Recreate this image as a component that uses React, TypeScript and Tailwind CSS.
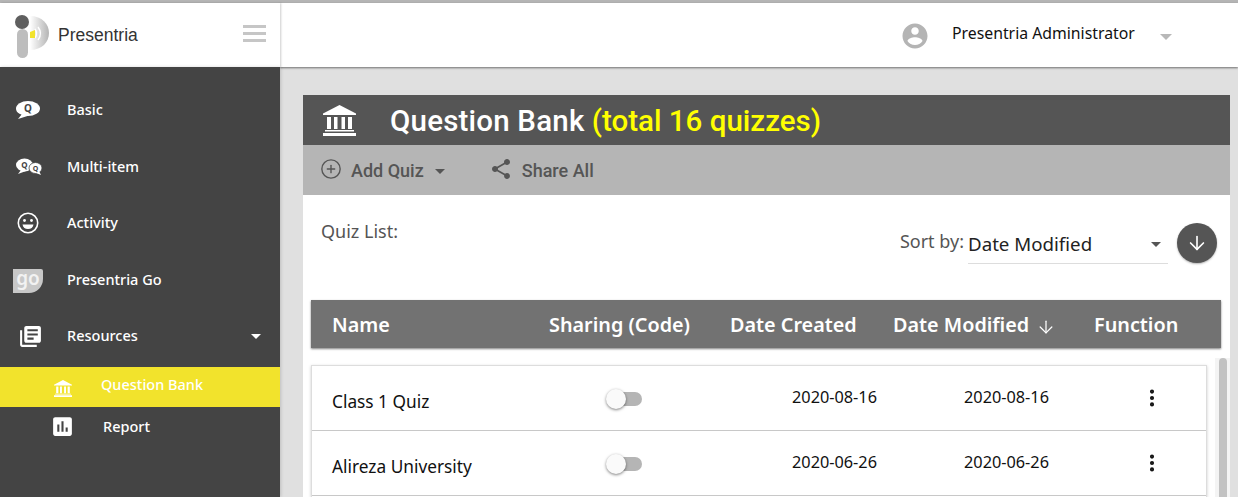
import React from 'react';
import { ArrowDown, CirclePlus, MoreVertical } from 'lucide-react';

const SANS = "font-['Noto_Sans','Open_Sans',sans-serif]";

const BankIcon: React.FC<{ className?: string }> = ({ className }) => (
    <svg viewBox="0 0 33 31" className={className} fill="currentColor">
        <path d="M16.500 0 L33 8.500 V10 H0 V8.500 Z" />
        <path d="M4 12h4v12H4zM11 12h3.500v12H11zM18.500 12H22v12h-3.500zM25 12h4v12h-4z" />
        <path d="M2 25h29v1.500H2zM0 28h33v3H0z" />
    </svg>
);

const Logo = () => (
    <svg width="36" height="46" viewBox="0 0 36 46" className="shrink-0">
        <defs>
            <linearGradient id="logoFade" x1="0" x2="1" y1="0" y2="0">
                <stop offset="0" stopColor="#ffffff" />
                <stop offset="1" stopColor="#b4b4b4" />
            </linearGradient>
        </defs>
        <path d="M16 4 C28 4 35 12 35 21 C35 30 28 38 16 38 Z" fill="url(#logoFade)" />
        <path d="M24 15 C27 19 27 24 24 28" stroke="#ffffff" strokeWidth="1.500" fill="none" />
        <path d="M21 17 C23 20 23 23 21 26" stroke="#ffffff" strokeWidth="1.500" fill="none" />
        <rect x="3" y="17" width="11" height="29" rx="5.500" fill="#bdbdbd" />
        <circle cx="8" cy="10" r="7" fill="#5f5f5f" />
        <path d="M16 20 L21 18 V26 L16 26 Z" fill="#f2e32c" />
    </svg>
);

const BasicIcon = () => (
    <svg width="26" height="20" viewBox="0 0 26 20">
        <ellipse cx="13" cy="8.500" rx="12" ry="7.500" fill="#fff" />
        <path d="M7 14 L3 19 L14 15.500 Z" fill="#fff" />
        <text x="13" y="12" textAnchor="middle" fontSize="10" fontWeight="700" fill="#444" fontFamily="Noto Sans">Q</text>
    </svg>
);

const MultiIcon = () => (
    <svg width="28" height="18" viewBox="0 0 28 18">
        <ellipse cx="9.500" cy="7" rx="8.500" ry="6.500" fill="#fff" />
        <path d="M6 12 L3 16 L11 13 Z" fill="#fff" />
        <ellipse cx="20.500" cy="10" rx="6.500" ry="5.500" fill="#fff" stroke="#444" strokeWidth="0.800" />
        <path d="M21 15 L26 17 L24 13 Z" fill="#fff" />
        <text x="9.500" y="10" textAnchor="middle" fontSize="8" fontWeight="700" fill="#444" fontFamily="Noto Sans">Q</text>
        <text x="20.500" y="12.500" textAnchor="middle" fontSize="7" fontWeight="700" fill="#444" fontFamily="Noto Sans">Q</text>
    </svg>
);

const SmileIcon = () => (
    <svg width="22" height="22" viewBox="0 0 22 22">
        <circle cx="11" cy="11" r="9.700" fill="none" stroke="#fff" strokeWidth="1.600" />
        <circle cx="7.500" cy="8.500" r="1.400" fill="#fff" />
        <circle cx="14.500" cy="8.500" r="1.400" fill="#fff" />
        <path d="M5.500 12.500 H16.500 C16 15.500 14 17 11 17 C8 17 6 15.500 5.500 12.500 Z" fill="#fff" />
    </svg>
);

const GoIcon = () => (
    <div className="w-[30px] h-[24px] mt-[2px] bg-[#c8c8c8] rounded-tr-[2px] rounded-br-[14px] flex items-start justify-center">
        <span className={`text-[#f2f2f2] text-[19px] leading-[18px] font-semibold ${SANS}`}>go</span>
    </div>
);

const ResourcesIcon = () => (
    <svg viewBox="0 0 24 24" className="w-[25px] h-[25px] text-white" fill="currentColor">
        <path d="M4 6H2v14c0 1.100.9 2 2 2h14v-2H4V6zm16-4H8c-1.100 0-2 .9-2 2v12c0 1.100.9 2 2 2h12c1.100 0 2-.9 2-2V4c0-1.100-.9-2-2-2zm-1 9H9V9h10v2zm-4 4H9v-2h6v2zm4-8H9V5h10v2z" />
    </svg>
);

const Caret: React.FC<{ className?: string }> = ({ className }) => (
    <div className={`w-0 h-0 border-x-[5px] border-x-transparent border-t-[5px] ${className}`} />
);

const NAV = [
    { label: 'Basic', icon: <BasicIcon />, iconClass: '' },
    { label: 'Multi-item', icon: <MultiIcon />, iconClass: 'ml-[1px]' },
    { label: 'Activity', icon: <SmileIcon />, iconClass: '' },
    { label: 'Presentria Go', icon: <GoIcon />, iconClass: '' },
    { label: 'Resources', icon: <ResourcesIcon />, iconClass: 'ml-[5px]', caret: true },
];

const QUIZZES = [
    { name: 'Class 1 Quiz', created: '2020-08-16', modified: '2020-08-16' },
    { name: 'Alireza University', created: '2020-06-26', modified: '2020-06-26' },
    { name: '', created: '', modified: '' },
];

const Sidebar = () => (
    <aside className="w-[280px] shrink-0 flex flex-col z-10">
        <div className="h-[64px] bg-white flex items-center pl-[14px] pr-[14px] shadow-[1px_0_2px_rgba(0,0,0,0.2)]">
            <Logo />
            <span className="ml-[8px] mt-[1px] text-[17.500px] text-[#333] font-['Liberation_Sans',sans-serif]">Presentria</span>
            <div className="ml-auto flex flex-col gap-[4px] -mt-[3px]">
                <div className="w-[23px] h-[3px] bg-[#c6c6c6]" />
                <div className="w-[23px] h-[3px] bg-[#c6c6c6]" />
                <div className="w-[23px] h-[3px] bg-[#c6c6c6]" />
            </div>
        </div>
        <nav className={`flex-1 bg-[#444444] pt-[14.750px] text-white text-[14.500px] font-medium ${SANS} shadow-[1px_0_3px_rgba(0,0,0,0.15)]`}>
            {NAV.map(item => (
                <div key={item.label} className="h-[56.500px] flex items-center pr-[19px]">
                    <div className="w-[56px] mr-[11px] flex justify-center">
                        <div className={item.iconClass}>{item.icon}</div>
                    </div>
                    <span>{item.label}</span>
                    {item.caret && <Caret className="ml-auto border-t-white" />}
                </div>
            ))}
            <div className="mt-[2.250px] h-[40px] bg-[#f2e32c] flex items-center">
                <BankIcon className="ml-[54px] w-[18px] h-[17px] mt-[3px] text-white" />
                <span className="ml-[29px] -mt-[3px]">Question Bank</span>
            </div>
            <div className="h-[40px] flex items-center">
                <svg viewBox="0 0 24 24" className="ml-[50px] w-[25px] h-[25px] text-white" fill="currentColor">
                    <path d="M19 3H5c-1.100 0-2 .9-2 2v14c0 1.100.9 2 2 2h14c1.100 0 2-.9 2-2V5c0-1.100-.9-2-2-2zM9 17H7v-7h2v7zm4 0h-2V7h2v10zm4 0h-2v-4h2v4z" />
                </svg>
                <span className="ml-[28px]">Report</span>
            </div>
        </nav>
    </aside>
);

const TopBar = () => (
    <header className={`h-[64px] shrink-0 bg-white flex items-center pl-[620px] shadow-[0_1px_2px_rgba(0,0,0,0.5)] z-[1] ${SANS}`}>
        <svg viewBox="0 0 24 24" className="w-[30px] h-[30px] text-[#b4b4b4] mt-[1px]" fill="currentColor">
            <path d="M12 2C6.480 2 2 6.480 2 12s4.480 10 10 10 10-4.480 10-10S17.520 2 12 2zm0 3c1.660 0 3 1.340 3 3s-1.340 3-3 3-3-1.340-3-3 1.340-3 3-3zm0 14.200c-2.500 0-4.710-1.280-6-3.220.03-1.990 4-3.080 6-3.080 1.990 0 5.970 1.090 6 3.080-1.290 1.940-3.500 3.220-6 3.220z" />
        </svg>
        <span className="ml-[22px] text-[15.800px] text-[#111] -mt-[3px]">Presentria Administrator</span>
        <Caret className="ml-[25px] mt-[3px] border-x-[6px] border-t-[6px] border-t-[#b8b8b8]" />
    </header>
);

const TableHead = () => (
    <div className={`h-[48px] bg-[#727272] flex items-center pl-[21px] pt-[2px] text-white text-[19.800px] font-semibold shadow-[0_1px_2px_rgba(0,0,0,0.5)] ${SANS}`}>
        <span className="w-[217px]">Name</span>
        <span className="w-[181px]">Sharing (Code)</span>
        <span className="w-[163px]">Date Created</span>
        <span className="w-[201px] flex items-center">
            Date Modified
            <ArrowDown className="ml-[7px] mt-[3px] w-[20px] h-[20px]" strokeWidth={1.500} />
        </span>
        <span>Function</span>
    </div>
);

const QuizRow: React.FC<{ name: string; created: string; modified: string }> = ({ name, created, modified }) => (
    <div className="h-[65px] shrink-0 flex items-center pl-[20px] border-b border-[#c8c8c8] text-[#111]">
        <span className="w-[274px] text-[17.300px] mt-[8px]">{name}</span>
        <div className="w-[186px] mt-[1px]">
            {name && (
                <div className="relative w-[36px] h-[20px] flex items-center">
                    <div className="ml-[2px] w-[34px] h-[14px] rounded-full bg-[#b5b5b5]" />
                    <div className="absolute left-0 top-0 w-[20px] h-[20px] rounded-full bg-[#fafafa] shadow-[0_1px_3px_rgba(0,0,0,0.5)]" />
                </div>
            )}
        </div>
        <span className="w-[172px] text-[16.300px] -mt-[2px]">{created}</span>
        <span className="w-[177px] text-[16.300px] -mt-[2px]">{modified}</span>
        {name && <MoreVertical className="w-[22px] h-[22px] -mt-[1px]" strokeWidth={2.500} />}
    </div>
);

const QuizCard = () => (
    <section className="flex-1 flex flex-col min-h-0">
        <div className="h-[50px] shrink-0 bg-[#555555] flex items-center pl-[20px]">
            <BankIcon className="w-[33px] h-[31px] text-white" />
            <h1 className="ml-[34px] mt-[2px] text-[29.500px] font-medium text-white font-['Roboto',sans-serif]">
                <span className="tracking-[0.2px]">Question Bank</span> <span className="text-[#ffff00]">(total 16 quizzes)</span>
            </h1>
        </div>
        <div className="h-[50px] shrink-0 bg-[#b5b5b5] flex items-center pl-[17px] text-[#555555] text-[18px] font-medium font-['Roboto',sans-serif]">
            <CirclePlus className="w-[22px] h-[22px] -mt-[3px]" strokeWidth={1.500} />
            <span className="ml-[9px]">Add Quiz</span>
            <Caret className="ml-[11px] mt-[3px] border-t-[#555555]" />
            <svg viewBox="0 0 24 24" className="ml-[44px] -mt-[3px] w-[24px] h-[24px]" fill="currentColor">
                <path d="M18 16.080c-.76 0-1.440.3-1.960.77L8.910 12.700c.05-.23.09-.46.09-.7s-.04-.47-.09-.7l7.050-4.110c.54.5 1.250.81 2.040.81 1.660 0 3-1.340 3-3s-1.340-3-3-3-3 1.340-3 3c0 .24.04.47.09.7L8.040 9.810C7.500 9.310 6.790 9 6 9c-1.660 0-3 1.340-3 3s1.340 3 3 3c.79 0 1.500-.31 2.040-.81l7.120 4.160c-.05.21-.08.43-.08.65 0 1.610 1.310 2.920 2.920 2.920 1.610 0 2.920-1.310 2.920-2.920s-1.310-2.920-2.920-2.920z" />
            </svg>
            <span className="ml-[9px]">Share All</span>
        </div>
        <div className={`flex-1 min-h-0 bg-white flex flex-col pl-[8px] overflow-hidden ${SANS}`}>
            <div className="h-[105px] shrink-0 flex items-start">
                <span className="ml-[10px] mt-[23px] text-[18px] text-[#555555]">Quiz List:</span>
                <div className="ml-auto mr-[13px] mt-[28px] flex items-start">
                    <span className="mt-[5px] text-[18px] text-[#555555]">Sort by:</span>
                    <div className="ml-[4px] w-[200px] h-[41px] border-b border-[#dddddd] flex items-center justify-between pr-[7px] pt-[3px]">
                        <span className="text-[18.700px] text-[#222]">Date Modified</span>
                        <Caret className="border-t-[#555555]" />
                    </div>
                    <div className="ml-[9px] w-[40px] h-[40px] rounded-full bg-[#555555] flex items-center justify-center text-white shadow-[0_1px_2px_rgba(0,0,0,0.3)]">
                        <ArrowDown className="w-[22px] h-[22px]" strokeWidth={1.800} />
                    </div>
                </div>
            </div>
            <div className="w-[910px] shrink-0">
                <TableHead />
            </div>
            <div className="flex-1 min-h-0 flex">
                <div className="w-[896px] mt-[17px] flex flex-col border-x border-t border-[#dddddd] shadow-[0_1px_3px_rgba(0,0,0,0.2)]">
                    {QUIZZES.map((quiz, i) => <QuizRow key={i} {...quiz} />)}
                </div>
                <div className="ml-[8px] mt-[10px] w-[15px] bg-[#f4f4f4] flex justify-center">
                    <div className="w-[8px] h-full rounded-t-full bg-[#c2c2c2]" />
                </div>
            </div>
        </div>
    </section>
);

export default function App() {
    return (
        <div className="w-[1238px] h-[497px] overflow-hidden flex flex-col bg-[#e0e0e0]">
            <div className="h-[3px] shrink-0 bg-[#b5b5b5]" />
            <div className="flex-1 min-h-0 flex">
                <Sidebar />
                <main className="flex-1 min-w-0 flex flex-col">
                    <TopBar />
                    <div className="flex-1 min-h-0 flex flex-col pt-[28px] pl-[23px] pr-[8px]">
                        <QuizCard />
                    </div>
                </main>
            </div>
        </div>
    );
}
